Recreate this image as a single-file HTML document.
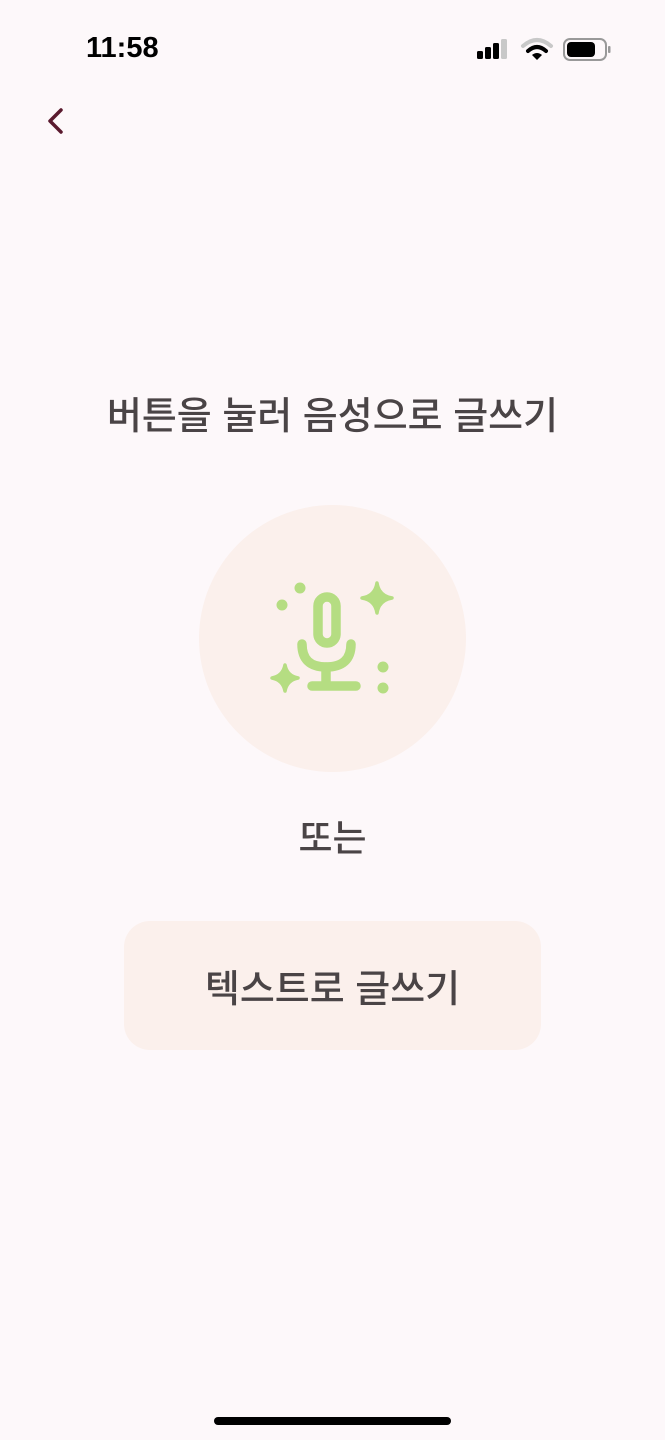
<!DOCTYPE html>
<html><head><meta charset="utf-8"><style>
html,body{margin:0;padding:0;}
body{width:665px;height:1440px;background:#fdf8fa;position:relative;overflow:hidden;font-family:"Liberation Sans","Noto Sans CJK KR",sans-serif;}
.t{position:absolute;left:0;width:665px;text-align:center;color:#4a4446;font-weight:500;}
</style></head><body>
<div style="position:absolute;left:86px;top:32px;font-size:29px;font-weight:bold;color:#000;">11:58</div>
<svg style="position:absolute;left:460px;top:25px" width="160" height="50">
<rect x="17" y="26" width="6" height="8" rx="1.5" fill="#000"/>
<rect x="25" y="22" width="6" height="12" rx="1.5" fill="#000"/>
<rect x="33" y="18" width="6" height="16" rx="1.5" fill="#000"/>
<rect x="41" y="14" width="6" height="20" rx="1.5" fill="#c8c8c8"/>
<path d="M63 21 Q77 9 91 21" stroke="#c8c8c8" stroke-width="4" fill="none" stroke-linecap="round"/>
<path d="M68 26 Q77 18 86 26" stroke="#000" stroke-width="4" fill="none" stroke-linecap="round"/>
<path d="M72 30 L77 35 L82 30 Q77 26 72 30Z" fill="#000"/>
<rect x="104" y="14" width="42" height="21" rx="6" fill="none" stroke="#999" stroke-width="2"/>
<rect x="107" y="17" width="28" height="15" rx="4" fill="#000"/>
<rect x="148" y="21" width="2.5" height="7" rx="1" fill="#999"/>
</svg>
<svg style="position:absolute;left:40px;top:105px" width="30" height="34"><path d="M21 5 L10 16 L21 27" stroke="#5a1a2e" stroke-width="3.5" fill="none" stroke-linecap="round" stroke-linejoin="round"/></svg>
<div class="t" style="top:385px;font-size:38px;">버튼을 눌러 음성으로 글쓰기</div>
<div style="position:absolute;left:199px;top:505px;width:267px;height:267px;border-radius:50%;background:#fbf0ec;"></div>
<svg style="position:absolute;left:0;top:0" width="665" height="800">
<g stroke="#b5dd82" stroke-width="9.5" fill="none" stroke-linecap="round">
<rect x="318" y="597" width="18" height="46" rx="9"/>
<path d="M302 644 Q302 667 326 667 Q351 667 351 644"/>
<path d="M326 667 V684"/>
<path d="M312 686 H356"/>
</g>
<g fill="#b5dd82">
<path d="M377 583 Q379 596 392 598 Q379 600 377 613 Q375 600 362 598 Q375 596 377 583Z" stroke="#b5dd82" stroke-width="3.5" stroke-linejoin="round"/>
<path d="M285 665 Q287 676 298 678 Q287 680 285 691 Q283 680 272 678 Q283 676 285 665Z" stroke="#b5dd82" stroke-width="3.5" stroke-linejoin="round"/>
<circle cx="300" cy="588" r="5.5"/><circle cx="282" cy="605" r="5.5"/>
<circle cx="383" cy="667" r="5.5"/><circle cx="383" cy="688" r="5.5"/>
</g>
</svg>
<div class="t" style="top:808px;font-size:37px;">또는</div>
<div style="position:absolute;left:124px;top:921px;width:417px;height:129px;border-radius:26px;background:#fbf0ec;"></div>
<div class="t" style="top:958px;font-size:38px;">텍스트로 글쓰기</div>
<div style="position:absolute;left:214px;top:1417px;width:237px;height:8px;border-radius:4px;background:#000;"></div>
</body></html>
